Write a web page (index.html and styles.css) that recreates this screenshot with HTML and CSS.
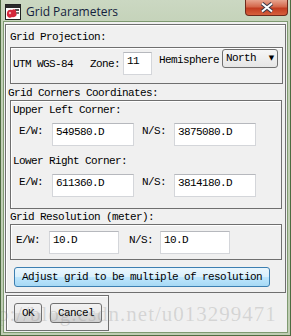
FILE: index.html
```html
<!DOCTYPE html>
<html lang="en">
<head>
  <meta charset="UTF-8">
  <title>Grid Parameters</title>
  <link rel="stylesheet" href="styles.css">
</head>
<body>
  <div class="window">
    <div class="titlebar">
      <svg class="app-icon" width="16" height="16" viewBox="0 0 16 16">
        <rect x="0.5" y="0.5" width="15" height="15" fill="#fff" stroke="#222"/>
        <rect x="1" y="1" width="14" height="3" fill="#2a2a2a"/>
        <rect x="10" y="5" width="4" height="2" fill="#555"/>
        <rect x="10" y="8" width="4" height="2" fill="#777"/>
        <path d="M2 9c0-3 3-4 5-3 2-2 5 0 4 3 2 2-1 5-4 4-2 2-6 0-5-4z" fill="#d4283c"/>
        <circle cx="5" cy="9" r="1.2" fill="#f6a6b0"/>
      </svg>
      <span class="title">Grid Parameters</span>
      <div class="close-btn">
        <svg width="14" height="11" viewBox="0 0 14 11">
          <path d="M2 1.5l5 4 5-4M2 9.5l5-4 5 4" stroke="#3a3a4a" stroke-width="4" fill="none"/>
          <path d="M2 1.5l5 4 5-4M2 9.5l5-4 5 4" stroke="#fff" stroke-width="2" fill="none"/>
        </svg>
      </div>
    </div>

    <div class="client">
      <div class="group main-group">
        <div class="legend legend-projection">Grid Projection:</div>
        <div class="group box-projection">
          <span class="lbl lbl-utm">UTM WGS-84</span>
          <span class="lbl lbl-zone">Zone:</span>
          <div class="entry entry-zone">11</div>
          <span class="lbl lbl-hemi">Hemisphere</span>
          <div class="select">North <span class="arrow">&#9660;</span></div>
        </div>

        <div class="legend legend-corners">Grid Corners Coordinates:</div>
        <div class="group box-corners">
          <div class="sub-label first">Upper Left Corner:</div>
          <div class="row">
            <span class="lbl lbl-ew">E/W:</span>
            <div class="entry entry-wide">549580.D</div>
            <span class="lbl lbl-ns">N/S:</span>
            <div class="entry entry-wide">3875080.D</div>
          </div>
          <div class="sub-label second">Lower Right Corner:</div>
          <div class="row">
            <span class="lbl lbl-ew">E/W:</span>
            <div class="entry entry-wide">611360.D</div>
            <span class="lbl lbl-ns">N/S:</span>
            <div class="entry entry-wide">3814180.D</div>
          </div>
        </div>

        <div class="legend legend-resolution">Grid Resolution (meter):</div>
        <div class="group box-resolution">
          <span class="lbl res-ew">E/W:</span>
          <div class="entry entry-res">10.D</div>
          <span class="lbl res-ns">N/S:</span>
          <div class="entry entry-res entry-res2">10.D</div>
        </div>

        <button class="btn-adjust">Adjust grid to be multiple of resolution</button>
      </div>

      <div class="group box-actions">
        <button class="btn btn-ok">OK</button>
        <button class="btn btn-cancel">Cancel</button>
      </div>
    </div>

    <div class="watermark">p://blog.csdn.net/u013299471</div>
  </div>
</body>
</html>
```

FILE: styles.css
```css
body {
  margin: 0;
  background: #fff;
}
.window {
  position: relative;
  width: 291px;
  height: 336px;
  box-sizing: border-box;
  background: linear-gradient(#cbd8c2, #c3d1b7 30px, #bfcdb3);
  border: 1px solid #4f6b42;
  border-top: none;
  overflow: hidden;
  font-family: "Liberation Mono", "DejaVu Sans Mono", monospace;
  font-size: 11px;
  letter-spacing: -0.6px;
  color: #000;
}
.titlebar {
  height: 22px;
  display: flex;
  align-items: center;
}
.app-icon {
  margin-left: 4px;
  margin-top: 1px;
}
.title {
  margin-left: 5px;
  font-family: "Open Sans", "Noto Sans", sans-serif;
  font-size: 12px;
  letter-spacing: 0;
  color: #14213d;
}
.close-btn {
  margin-left: auto;
  margin-right: 2px;
  align-self: flex-start;
  width: 43px;
  height: 16px;
  box-sizing: border-box;
  border: 1px solid #6e2a1c;
  border-top: none;
  border-radius: 0 0 4px 4px;
  background: linear-gradient(#e7a48e, #d4684c 45%, #c23c20 55%, #d6603c);
  display: flex;
  align-items: center;
  justify-content: center;
}
.client {
  margin: 0 3px;
  height: 310px;
  background: #f0f0f0;
  box-shadow: 0 0 0 1px #7f9a71;
  padding-top: 2px;
  box-sizing: border-box;
}
.group {
  border: 1px solid #6f6f6f;
  box-shadow: inset 1px 1px 0 #fff;
  box-sizing: border-box;
}
.main-group {
  margin: 0 1px;
  height: 269px;
  display: flex;
  flex-direction: column;
  align-items: flex-start;
}
.legend {
  line-height: 13px;
  white-space: nowrap;
}
.legend-projection {
  margin: 6px 0 0 4px;
}
.box-projection {
  margin: 3px 0 0 4px;
  width: 273px;
  height: 37px;
  display: flex;
  align-items: flex-start;
  padding-left: 2px;
}
.lbl {
  line-height: 13px;
  white-space: nowrap;
}
.lbl-utm {
  margin-top: 10px;
}
.lbl-zone {
  margin: 10px 0 0 17px;
}
.entry {
  background: #fff;
  border: 1px solid #d4d6da;
  border-top-color: #b6b8bd;
  box-sizing: border-box;
  height: 23px;
  padding: 2px 0 0 3px;
  line-height: 13px;
  font-family: "Liberation Mono", "DejaVu Sans Mono", monospace;
  font-size: 11px;
}
.entry-zone {
  margin: 4px 0 0 3px;
  width: 29px;
}
.lbl-hemi {
  margin: 6px 0 0 7px;
}
.select {
  margin: 1px 0 0 3px;
  width: 56px;
  height: 19px;
  box-sizing: border-box;
  border: 1px solid #707070;
  border-radius: 3px;
  background: linear-gradient(#f6f6f6, #e6e6e6);
  line-height: 16px;
  padding-left: 3px;
  display: flex;
}
.select .arrow {
  margin-left: auto;
  margin-right: 3px;
  font-family: "DejaVu Sans", sans-serif;
  font-size: 7px;
  letter-spacing: 0;
}
.legend-corners {
  margin: 3px 0 0 2px;
}
.box-corners {
  margin: 0 0 0 4px;
  width: 272px;
  height: 109px;
  padding-left: 2px;
}
.sub-label {
  line-height: 13px;
}
.sub-label.first {
  margin-top: 3px;
}
.sub-label.second {
  margin-top: 9px;
}
.row {
  display: flex;
  align-items: flex-start;
  margin-top: 6px;
  padding-left: 6px;
}
.row .lbl {
  margin-top: 2px;
}
.entry-wide {
  width: 82px;
}
.lbl-ew + .entry {
  margin-left: 9px;
}
.lbl-ns {
  margin-left: 8px;
}
.lbl-ns + .entry {
  margin-left: 8px;
}
.legend-resolution {
  margin: 2px 0 0 4px;
}
.box-resolution {
  margin: 0 0 0 4px;
  width: 272px;
  height: 36px;
  display: flex;
  align-items: flex-start;
  padding-left: 5px;
}
.box-resolution .lbl {
  margin-top: 9px;
}
.entry-res {
  margin: 6px 0 0 9px;
  width: 70px;
}
.res-ns {
  margin-left: 10px;
}
.entry-res2 {
  margin-left: 7px;
}
.btn-adjust {
  margin: 7px 0 0 8px;
  width: 256px;
  height: 20px;
  padding: 0;
  border: 1px solid #3c7fb1;
  border-radius: 3px;
  background: linear-gradient(#eaf6fd, #d9f0fc 50%, #bee6fd 51%, #a7d9f5);
  font-family: "Liberation Mono", "DejaVu Sans Mono", monospace;
  font-size: 11px;
  letter-spacing: -0.6px;
  color: #000;
  line-height: 16px;
}
.box-actions {
  margin: 2px 0 0 2px;
  width: 103px;
  height: 36px;
  display: flex;
  align-items: flex-start;
  padding: 7px 0 0 7px;
  gap: 8px;
}
.btn {
  height: 20px;
  padding: 0;
  border: 1px solid #707070;
  border-radius: 3px;
  background: linear-gradient(#f2f2f2, #ebebeb 50%, #dddddd 51%, #cfcfcf);
  font-family: "Liberation Mono", "DejaVu Sans Mono", monospace;
  font-size: 11px;
  letter-spacing: -0.6px;
  color: #000;
  line-height: 16px;
}
.btn-ok {
  width: 28px;
}
.btn-cancel {
  width: 52px;
}
.watermark {
  position: absolute;
  left: -3px;
  top: 302px;
  font-family: "Liberation Serif", serif;
  font-size: 21px;
  letter-spacing: 1px;
  line-height: 24px;
  white-space: nowrap;
  color: rgba(130, 130, 130, 0.25);
  pointer-events: none;
}
```
